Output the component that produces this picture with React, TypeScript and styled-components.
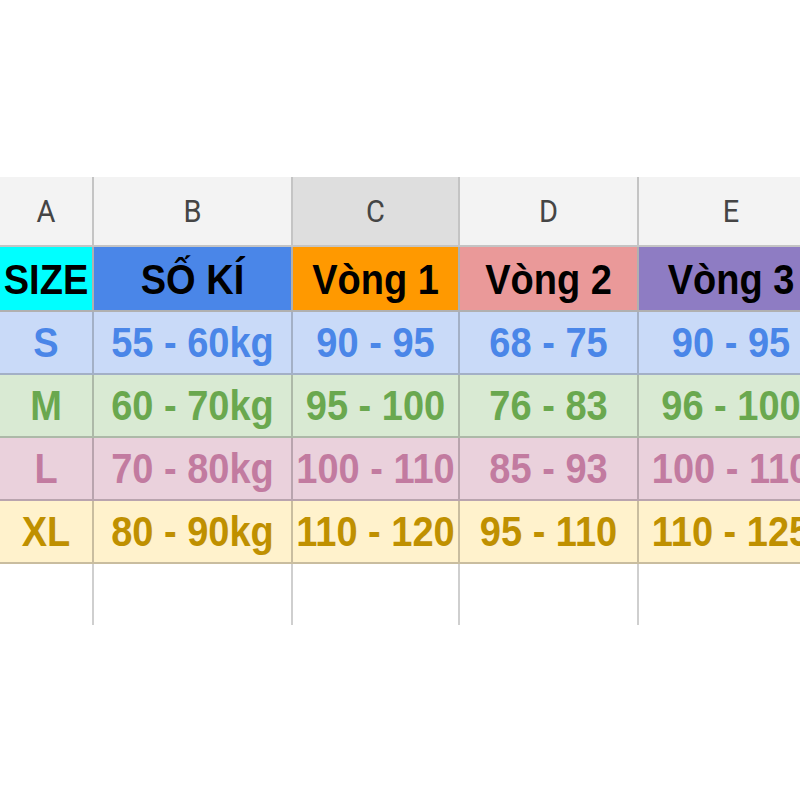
import React from "react";
import styled, { createGlobalStyle } from "styled-components";

const Global = createGlobalStyle`
  html, body { margin: 0; padding: 0; background: #ffffff; overflow: hidden; }
  body { width: 800px; height: 800px; }
`;

const Page = styled.div`
  width: 800px;
  height: 800px;
  padding-top: 177px;
  box-sizing: border-box;
  overflow: hidden;
`;

const Sheet = styled.div`
  display: grid;
  grid-template-columns: 94px 199px 167px 179px 186px;
  grid-template-rows: 70px 65px 63px 63px 63px 63px 61px;
  width: 825px;
`;

const Cell = styled.div<{ $bg: string; $line: string; $noBottom?: boolean; $drop?: number }>`
  box-sizing: border-box;
  display: flex;
  align-items: center;
  justify-content: center;
  padding-top: ${(p) => p.$drop ?? 0}px;
  background: ${(p) => p.$bg};
  border-right: 2px solid ${(p) => p.$line};
  border-bottom: ${(p) => (p.$noBottom ? "none" : `2px solid ${p.$line}`)};
  overflow: visible;
  white-space: nowrap;
`;

const ColLetter = styled.span`
  font-family: Roboto, "Liberation Sans", Arial, sans-serif;
  font-size: 29px;
  line-height: 1;
  color: #454545;
  transform: scaleY(1.1);
`;

const Value = styled.span<{ $color: string }>`
  font-family: "Liberation Sans", Arial, sans-serif;
  font-weight: 700;
  font-size: 38px;
  line-height: 1;
  color: ${(p) => p.$color};
  transform: scaleY(1.1);
  position: relative;
  z-index: 1;
`;

const letters = ["A", "B", "C", "D", "E"];

const titles: { text: string; bg: string }[] = [
  { text: "SIZE", bg: "#00ffff" },
  { text: "SỐ KÍ", bg: "#4a86e8" },
  { text: "Vòng 1", bg: "#ff9900" },
  { text: "Vòng 2", bg: "#ea9999" },
  { text: "Vòng 3", bg: "#8e7cc3" },
];

const rows: { bg: string; color: string; line: string; cells: string[] }[] = [
  {
    bg: "#c9daf8",
    color: "#4a86e8",
    line: "#a3b0c6",
    cells: ["S", "55 - 60kg", "90 - 95", "68 - 75", "90 - 95"],
  },
  {
    bg: "#d9ead3",
    color: "#6aa84f",
    line: "#adb9a8",
    cells: ["M", "60 - 70kg", "95 - 100", "76 - 83", "96 - 100"],
  },
  {
    bg: "#ead1dc",
    color: "#c27ba0",
    line: "#b9a4ae",
    cells: ["L", "70 - 80kg", "100 - 110", "85 - 93", "100 - 110"],
  },
  {
    bg: "#fff2cc",
    color: "#bf9000",
    line: "#c9bd9f",
    cells: ["XL", "80 - 90kg", "110 - 120", "95 - 110", "110 - 125"],
  },
];

export default function App() {
  return (
    <Page>
      <Global />
      <Sheet>
        {letters.map((l) => (
          <Cell key={l} $bg={l === "C" ? "#dedede" : "#f3f3f3"} $line="#c4c4c4">
            <ColLetter>{l}</ColLetter>
          </Cell>
        ))}
        {titles.map((t) => (
          <Cell key={t.text} $bg={t.bg} $line="#b0b0b0" $drop={3}>
            <Value $color="#000000">{t.text}</Value>
          </Cell>
        ))}
        {rows.map((r) =>
          r.cells.map((c, i) => (
            <Cell key={r.cells[0] + i} $bg={r.bg} $line={r.line}>
              <Value $color={r.color}>{c}</Value>
            </Cell>
          ))
        )}
        {letters.map((l) => (
          <Cell key={"empty" + l} $bg="#ffffff" $line="#cfcfcf" $noBottom />
        ))}
      </Sheet>
    </Page>
  );
}
